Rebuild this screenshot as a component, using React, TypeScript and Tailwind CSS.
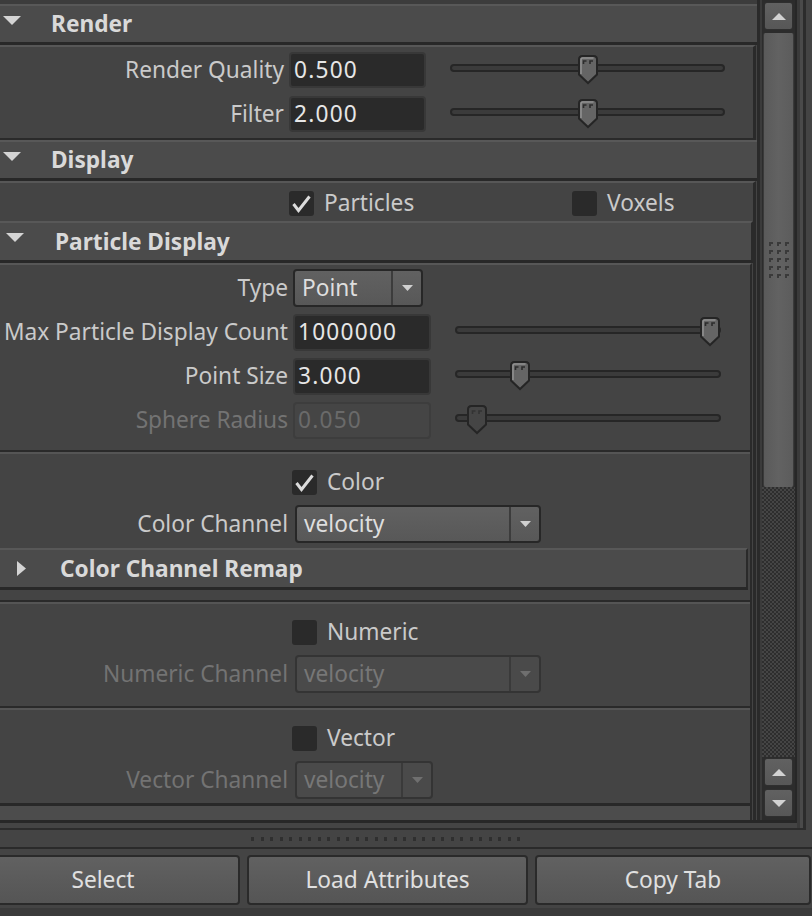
import React from "react";

function DownTri({ className = "" }: { className?: string }) {
  return (
    <svg width="18" height="9" viewBox="0 0 18 9" className={className}>
      <polygon points="0,0 18,0 9,9" fill="#d4d4d4" />
    </svg>
  );
}

function RightTri({ className = "" }: { className?: string }) {
  return (
    <svg width="9" height="15" viewBox="0 0 9 15" className={className}>
      <polygon points="0,0 9,7.5 0,15" fill="#d4d4d4" />
    </svg>
  );
}

function SmallDown({ color = "#d0d0d0" }: { color?: string }) {
  return (
    <svg width="11" height="6" viewBox="0 0 11 6">
      <polygon points="0,0 11,0 5.5,6" fill={color} />
    </svg>
  );
}

function Thumb({ disabled }: { disabled?: boolean }) {
  return (
    <svg width="22" height="31" viewBox="0 0 22 31">
      <path
        d="M2 5.5 Q2 2 5.5 2 H16.5 Q20 2 20 5.5 V20.5 L11 29 L2 20.5 Z"
        fill={disabled ? "#454545" : "#656565"}
        stroke="#252525"
        strokeWidth="2"
      />
      {!disabled && (
        <path d="M4 20 V5.8 Q4 4 5.8 4 H16.5" stroke="#909090" strokeWidth="1.6" fill="none" />
      )}
      <path d="M6.5 10 V7 H9.5" stroke={disabled ? "#333333" : "#2c2c2c"} strokeWidth="1.6" fill="none" />
      <path d="M13 10 V7 H16" stroke={disabled ? "#333333" : "#2c2c2c"} strokeWidth="1.6" fill="none" />
    </svg>
  );
}

function Slider({
  width,
  frac,
  disabled,
  className = "",
}: {
  width: number;
  frac: number;
  disabled?: boolean;
  className?: string;
}) {
  const center = 10 + frac * (width - 20);
  return (
    <div
      className={`relative mb-[4px] h-[8px] rounded-full border-2 border-[#262626] bg-[#3b3b3b] ${className}`}
      style={{ width }}
    >
      <div className="absolute top-[-12px]" style={{ left: center - 11 - 2 }}>
        <Thumb disabled={disabled} />
      </div>
    </div>
  );
}

function Check({ checked }: { checked?: boolean }) {
  return (
    <div className="flex h-[25px] w-[25px] shrink-0 items-center justify-center rounded-[3px] bg-[#2a2a2a]">
      {checked && (
        <svg width="25" height="25" viewBox="0 0 25 25">
          <polyline points="4.5,13 9.5,19.5 20.5,5.5" fill="none" stroke="#dcdcdc" strokeWidth="3" />
        </svg>
      )}
    </div>
  );
}

function Dropdown({
  text,
  widthClass,
  disabled,
}: {
  text: string;
  widthClass: string;
  disabled?: boolean;
}) {
  return (
    <div
      className={`flex h-[38px] ${widthClass} rounded-[4px] border-2 ${
        disabled
          ? "border-[#343434] bg-[#4a4a4a] text-[#777777]"
          : "border-[#272727] bg-linear-to-b from-[#616161] to-[#585858] text-[#dedede]"
      }`}
    >
      <div className="flex flex-1 items-center pl-[7px]">{text}</div>
      <div
        className={`flex w-[30px] items-center justify-center border-l-2 ${
          disabled ? "border-[#3a3a3a]" : "border-[#3c3c3c]"
        }`}
      >
        <SmallDown color={disabled ? "#6f6f6f" : "#d0d0d0"} />
      </div>
    </div>
  );
}

function Field({
  text,
  widthClass,
  hClass,
  ml,
  disabled,
}: {
  text: string;
  widthClass: string;
  hClass: string;
  ml: string;
  disabled?: boolean;
}) {
  return (
    <div
      className={`${ml} flex ${hClass} ${widthClass} shrink-0 items-center rounded-[4px] border-2 pl-[3px] tracking-[1.2px] ${
        disabled ? "border-[#3d3d3d] bg-[#454545] text-[#6a6a6a]" : "border-[#383838] bg-[#2a2a2a] text-[#e6e6e6]"
      }`}
    >
      {text}
    </div>
  );
}

function Separator() {
  return (
    <div className="shrink-0">
      <div className="h-[2px] bg-[#2a2a2a]" />
      <div className="h-[2px] bg-[#555555]" />
    </div>
  );
}

function ScrollBtn({ up }: { up?: boolean }) {
  return (
    <div className="flex h-[28px] shrink-0 items-center justify-center rounded-[3px] border border-[#2f2f2f] bg-linear-to-b from-[#616161] to-[#575757]">
      <svg width="14" height="7" viewBox="0 0 14 7">
        <polygon points={up ? "0,7 14,7 7,0" : "0,0 14,0 7,7"} fill="#d2d2d2" />
      </svg>
    </div>
  );
}

export default function App() {
  const gripDots = Array.from({ length: 15 });
  const splitDots = Array.from({ length: 29 });
  return (
    <div className="flex h-[916px] w-[812px] flex-col overflow-hidden bg-[#444444] font-['Noto_Sans','DejaVu_Sans',sans-serif] text-[22.7px] leading-[20px] text-[#cacaca]">
      {/* outer frame */}
      <div className="flex h-[830px] w-[806px] shrink-0 border-r-[3px] border-b-2 border-[#2c2c2c]">
        <div className="flex h-[823px] w-[797px] shrink-0 border-r-2 border-b-[3px] border-[#272727]">
          {/* viewport */}
          <div className="flex h-[820px] w-[757px] shrink-0 flex-col overflow-hidden">
            <div className="h-[4px] shrink-0 bg-[#3c3c3c]" />

            {/* Render header */}
            <div className="flex h-[41px] shrink-0 items-center border-t-2 border-b-[3px] border-t-[#585858] border-b-[#282828] bg-[#4b4b4b]">
              <DownTri className="mb-[8px] ml-[3px] shrink-0" />
              <span className="ml-[30px] font-bold text-[#d9d9d9]">Render</span>
            </div>

            {/* Render content */}
            <div className="w-[756px] shrink-0 border-t-2 border-r-[3px] border-b-2 border-t-[#575757] border-r-[#2a2a2a] border-b-[#2a2a2a] pt-[1px] pb-[2px]">
              <div className="flex h-[44px] items-center">
                <div className="w-[284px] shrink-0 text-right">Render Quality</div>
                <Field text="0.500" widthClass="w-[137px]" hClass="h-[36px]" ml="ml-[5px]" />
                <Slider width={275} frac={0.5} className="ml-[24px]" />
              </div>
              <div className="flex h-[44px] items-center">
                <div className="w-[284px] shrink-0 text-right">Filter</div>
                <Field text="2.000" widthClass="w-[137px]" hClass="h-[36px]" ml="ml-[5px]" />
                <Slider width={275} frac={0.5} className="ml-[24px]" />
              </div>
            </div>

            {/* Display header */}
            <div className="flex h-[41px] shrink-0 items-center border-t-2 border-b-[3px] border-t-[#585858] border-b-[#282828] bg-[#4b4b4b]">
              <DownTri className="mb-[8px] ml-[3px] shrink-0" />
              <span className="ml-[30px] font-bold text-[#d9d9d9]">Display</span>
            </div>

            {/* Display content */}
            <div className="flex w-[756px] shrink-0 flex-col border-t-2 border-r-[3px] border-t-[#575757] border-r-[#2a2a2a]">
              <div className="flex h-[38px] shrink-0 items-center pt-[2px]">
                <div className="ml-[289px] flex w-[283px] items-center">
                  <Check checked />
                  <span className="ml-[10px]">Particles</span>
                </div>
                <Check />
                <span className="ml-[10px]">Voxels</span>
              </div>

              {/* Particle Display header */}
              <div className="flex h-[42px] shrink-0 items-center border-t-2 border-r-2 border-b-[3px] border-t-[#585858] border-r-[#2a2a2a] border-b-[#282828] bg-[#4b4b4b]">
                <DownTri className="mb-[8px] ml-[6px] shrink-0" />
                <span className="ml-[31px] font-bold text-[#d9d9d9]">Particle Display</span>
              </div>

              {/* Particle Display content */}
              <div className="flex w-[752px] shrink-0 flex-col border-t-2 border-r-2 border-t-[#575757] border-r-[#2a2a2a] pt-[1px]">
                <div className="flex h-[44px] shrink-0 items-center">
                  <div className="w-[288px] shrink-0 text-right">Type</div>
                  <div className="ml-[5px]">
                    <Dropdown text="Point" widthClass="w-[130px]" />
                  </div>
                </div>
                <div className="flex h-[44px] shrink-0 items-center">
                  <div className="w-[288px] shrink-0 text-right whitespace-nowrap">Max Particle Display Count</div>
                  <Field text="1000000" widthClass="w-[138px]" hClass="h-[37px]" ml="ml-[5px]" />
                  <Slider width={266} frac={0.997} className="ml-[24px]" />
                </div>
                <div className="flex h-[44px] shrink-0 items-center">
                  <div className="w-[288px] shrink-0 text-right">Point Size</div>
                  <Field text="3.000" widthClass="w-[138px]" hClass="h-[37px]" ml="ml-[5px]" />
                  <Slider width={266} frac={0.222} className="ml-[24px]" />
                </div>
                <div className="flex h-[44px] shrink-0 items-center">
                  <div className="w-[288px] shrink-0 text-right text-[#737373]">Sphere Radius</div>
                  <Field text="0.050" widthClass="w-[138px]" hClass="h-[37px]" ml="ml-[5px]" disabled />
                  <Slider width={266} frac={0.05} disabled className="ml-[24px]" />
                </div>

                <div className="h-[8px] shrink-0" />
                <Separator />
                <div className="h-[7px] shrink-0" />

                <div className="flex h-[42px] shrink-0 items-center">
                  <div className="ml-[292px]">
                    <Check checked />
                  </div>
                  <span className="ml-[10px]">Color</span>
                </div>
                <div className="flex h-[42px] shrink-0 items-center">
                  <div className="w-[288px] shrink-0 text-right">Color Channel</div>
                  <div className="ml-[7px]">
                    <Dropdown text="velocity" widthClass="w-[246px]" />
                  </div>
                </div>

                <div className="h-[3px] shrink-0" />
                {/* Color Channel Remap header */}
                <div className="flex h-[42px] w-[748px] shrink-0 items-center border-t-2 border-r-2 border-b-[3px] border-t-[#585858] border-r-[#2a2a2a] border-b-[#282828] bg-[#4b4b4b]">
                  <RightTri className="ml-[17px] shrink-0" />
                  <span className="ml-[34px] font-bold text-[#d9d9d9]">Color Channel Remap</span>
                </div>
                <div className="h-[10px] shrink-0" />
                <Separator />
                <div className="h-[7px] shrink-0" />

                <div className="flex h-[42px] shrink-0 items-center">
                  <div className="ml-[292px]">
                    <Check />
                  </div>
                  <span className="ml-[10px]">Numeric</span>
                </div>
                <div className="flex h-[42px] shrink-0 items-center">
                  <div className="w-[288px] shrink-0 text-right text-[#737373]">Numeric Channel</div>
                  <div className="ml-[7px]">
                    <Dropdown text="velocity" widthClass="w-[246px]" disabled />
                  </div>
                </div>

                <div className="h-[11px] shrink-0" />
                <Separator />
                <div className="h-[7px] shrink-0" />

                <div className="flex h-[42px] shrink-0 items-center">
                  <div className="ml-[292px]">
                    <Check />
                  </div>
                  <span className="ml-[10px]">Vector</span>
                </div>
                <div className="flex h-[42px] shrink-0 items-center">
                  <div className="w-[288px] shrink-0 text-right text-[#737373]">Vector Channel</div>
                  <div className="ml-[7px]">
                    <Dropdown text="velocity" widthClass="w-[138px]" disabled />
                  </div>
                </div>
                <div className="h-[2px] shrink-0" />
                <div className="h-[44px] shrink-0 border-t-[3px] border-t-[#282828] bg-[#4c4c4c]" />
              </div>
            </div>
          </div>

          {/* scrollbar column */}
          <div className="w-[3px] shrink-0 bg-[#2a2a2a]" />
          <div className="w-[2px] shrink-0 bg-[#3b3b3b]" />
          <div className="flex w-[33px] shrink-0 flex-col bg-[#2c2c2c]">
            <div className="mx-[2px] mt-[2px]">
              <ScrollBtn up />
            </div>
            <div className="h-[3px] shrink-0" />
            <div className="mx-[1px] flex h-[454px] shrink-0 flex-col items-center rounded-[2px] border-x border-[#3a3a3a] bg-linear-to-r from-[#5a5a5a] via-[#626262] to-[#5c5c5c]">
              <div className="mt-[209px] grid grid-cols-3 gap-x-[4px] gap-y-[4px]">
                {gripDots.map((_, i) => (
                  <div key={i} className="h-[4px] w-[4px] border-t-2 border-l-2 border-[#3a3a3a]" />
                ))}
              </div>
            </div>
            <div className="h-[270px] shrink-0 bg-[repeating-conic-gradient(#2e2e2e_0%_25%,#454545_0%_50%)] bg-[length:4px_4px]" />
            <div className="h-[1px] shrink-0" />
            <div className="mx-[2px]">
              <ScrollBtn up />
            </div>
            <div className="h-[3px] shrink-0" />
            <div className="mx-[2px]">
              <ScrollBtn />
            </div>
          </div>
        </div>
        <div className="flex flex-1 bg-[#444444]">
          <div className="w-[3px] bg-[#3a3a3a]" />
          <div className="w-[3px] bg-[#4a4a4a]" />
        </div>
      </div>

      {/* splitter */}
      <div className="flex h-[19px] shrink-0 items-start border-b-2 border-b-[#2a2a2a] pt-[7px]">
        <div className="ml-[251px] flex gap-x-[6.5px]">
          {splitDots.map((_, i) => (
            <div key={i} className="h-[4px] w-[3px] bg-[#2f2f2f]" />
          ))}
        </div>
      </div>
      <div className="h-[6px] shrink-0" />

      {/* buttons */}
      <div className="flex h-[50px] shrink-0 gap-x-[7px] text-[#e0e0e0]">
        <div className="-ml-[34px] flex w-[274px] items-center justify-center rounded-[4px] border-2 border-[#2a2a2a] bg-linear-to-b from-[#616161] to-[#555555]">
          Select
        </div>
        <div className="flex w-[281px] items-center justify-center rounded-[4px] border-2 border-[#2a2a2a] bg-linear-to-b from-[#616161] to-[#555555]">
          Load Attributes
        </div>
        <div className="flex w-[276px] items-center justify-center rounded-[4px] border-2 border-[#2a2a2a] bg-linear-to-b from-[#616161] to-[#555555]">
          Copy Tab
        </div>
      </div>
      <div className="h-[3px] shrink-0" />
      <div className="flex-1 bg-[#3b3b3b]" />
    </div>
  );
}
